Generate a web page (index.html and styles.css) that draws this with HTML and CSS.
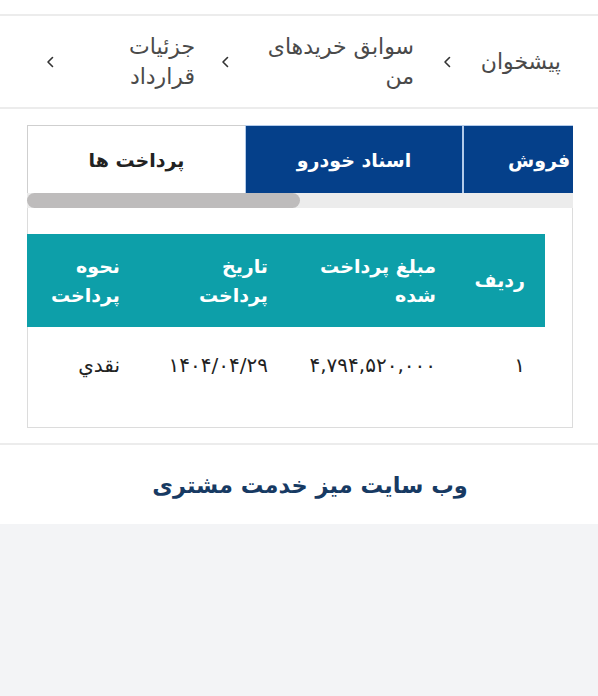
FILE: index.html
```html
<!DOCTYPE html>
<html lang="fa" dir="rtl">
<head>
<meta charset="utf-8">
<title>جزئیات قرارداد</title>
<link rel="stylesheet" href="styles.css">
</head>
<body>
<div class="page">
  <div class="topbar"></div>
  <nav class="crumbs">
    <ol class="crumb-list">
      <li class="crumb crumb-home">پیشخوان</li>
      <li class="sep sep-1"><svg viewBox="0 0 8 12" width="8" height="12"><path d="M6.5 1.5 L2 6 L6.5 10.5" fill="none" stroke="#333" stroke-width="1.6" stroke-linecap="round" stroke-linejoin="round"/></svg></li>
      <li class="crumb crumb-history">سوابق خریدهای من</li>
      <li class="sep sep-2"><svg viewBox="0 0 8 12" width="8" height="12"><path d="M6.5 1.5 L2 6 L6.5 10.5" fill="none" stroke="#333" stroke-width="1.6" stroke-linecap="round" stroke-linejoin="round"/></svg></li>
      <li class="crumb crumb-detail">جزئیات قرارداد</li>
      <li class="sep sep-3"><svg viewBox="0 0 8 12" width="8" height="12"><path d="M6.5 1.5 L2 6 L6.5 10.5" fill="none" stroke="#333" stroke-width="1.6" stroke-linecap="round" stroke-linejoin="round"/></svg></li>
    </ol>
  </nav>

  <section class="panel">
    <div class="tabs">
      <div class="tab tab-active">پرداخت ها</div>
      <div class="tab tab-blue">اسناد خودرو</div>
      <div class="tab tab-blue tab-clipped">فروش</div>
    </div>
    <div class="scrollbar"><div class="thumb"></div></div>
    <div class="content">
      <table class="pay-table">
        <thead>
          <tr>
            <th class="c1">ردیف</th>
            <th class="c2">مبلغ پرداخت شده</th>
            <th class="c3">تاریخ پرداخت</th>
            <th class="c4">نحوه پرداخت</th>
          </tr>
        </thead>
        <tbody>
          <tr>
            <td class="c1">۱</td>
            <td class="c2">۴,۷۹۴,۵۲۰,۰۰۰</td>
            <td class="c3">۱۴۰۴/۰۴/۲۹</td>
            <td class="c4">نقدي</td>
          </tr>
        </tbody>
      </table>
    </div>
  </section>

  <footer class="footer">
    <div class="footer-title">وب سایت میز خدمت مشتری</div>
  </footer>
</div>
</body>
</html>
```
FILE: styles.css
```css
* { box-sizing: border-box; }
html, body { margin: 0; padding: 0; }
body {
  background: #f3f4f6;
  font-family: "DejaVu Sans", "Noto Sans", sans-serif;
  color: #222;
}
.page {
  background: #fff;
}
.topbar {
  height: 16px;
  border-bottom: 2px solid #ececec;
}
.crumbs {
  height: 93px;
  border-bottom: 2px solid #ececec;
  display: flex;
  align-items: center;
  padding-right: 37px;
}
.crumb-list {
  list-style: none;
  margin: 0;
  padding: 0;
  display: flex;
  align-items: center;
}
.crumb {
  font-size: 22px;
  line-height: 30px;
  color: #4a4a4a;
  text-align: right;
}
.crumb-home { width: 86px; }
.crumb-history { width: 149px; margin-right: 29px; }
.crumb-detail { width: 70px; margin-right: 26px; }
.sep {
  display: flex;
  align-items: center;
  width: 8px;
}
.sep-1 { margin-right: 24px; }
.sep-2 { margin-right: 36px; }
.sep-3 { margin-right: 71px; }

.panel {
  margin: 16px 25px 0 27px;
}
.tabs {
  direction: ltr;
  display: flex;
  overflow: hidden;
  height: 68px;
}
.tab {
  flex: 0 0 218px;
  display: flex;
  align-items: center;
  justify-content: center;
  font-size: 19px;
  font-weight: bold;
}
.tab-active {
  background: #fff;
  color: #222;
  border-top: 1px solid #cfcfcf;
  border-left: 1px solid #cfcfcf;
}
.tab-blue {
  background: #05408a;
  color: #fff;
  border: 1px solid #b3cbea;
  border-bottom: none;
}
.tab-clipped {
  justify-content: flex-start;
  padding-left: 44px;
}
.scrollbar {
  direction: ltr;
  height: 15px;
  background: #ececec;
}
.thumb {
  width: 273px;
  height: 15px;
  background: #bebcbc;
  border-radius: 8px;
}
.content {
  border: 1px solid #dcdcdc;
  border-top: none;
  padding: 26px 27px 24px 0;
}
.pay-table {
  width: 100%;
  border-collapse: collapse;
  table-layout: fixed;
}
.pay-table th {
  background: #0d9fa9;
  color: #fff;
  font-weight: bold;
  font-size: 19px;
  line-height: 29px;
  text-align: right;
  padding: 17px 20px 17px 10px;
  height: 93px;
  vertical-align: middle;
}
.pay-table td {
  height: 76px;
  font-size: 20px;
  text-align: right;
  padding: 0 20px 0 6px;
  color: #222;
  vertical-align: middle;
}
.c1 { width: 89px; }
.c2 { width: 168px; }
.c3 { width: 148px; }
.c4 { width: 113px; }

.footer {
  margin-top: 15px;
  border-top: 2px solid #ececec;
  height: 81px;
  display: flex;
  align-items: center;
  justify-content: center;
  padding-left: 22px;
}
.footer-title {
  font-size: 22.5px;
  font-weight: bold;
  color: #173a63;
}
```
